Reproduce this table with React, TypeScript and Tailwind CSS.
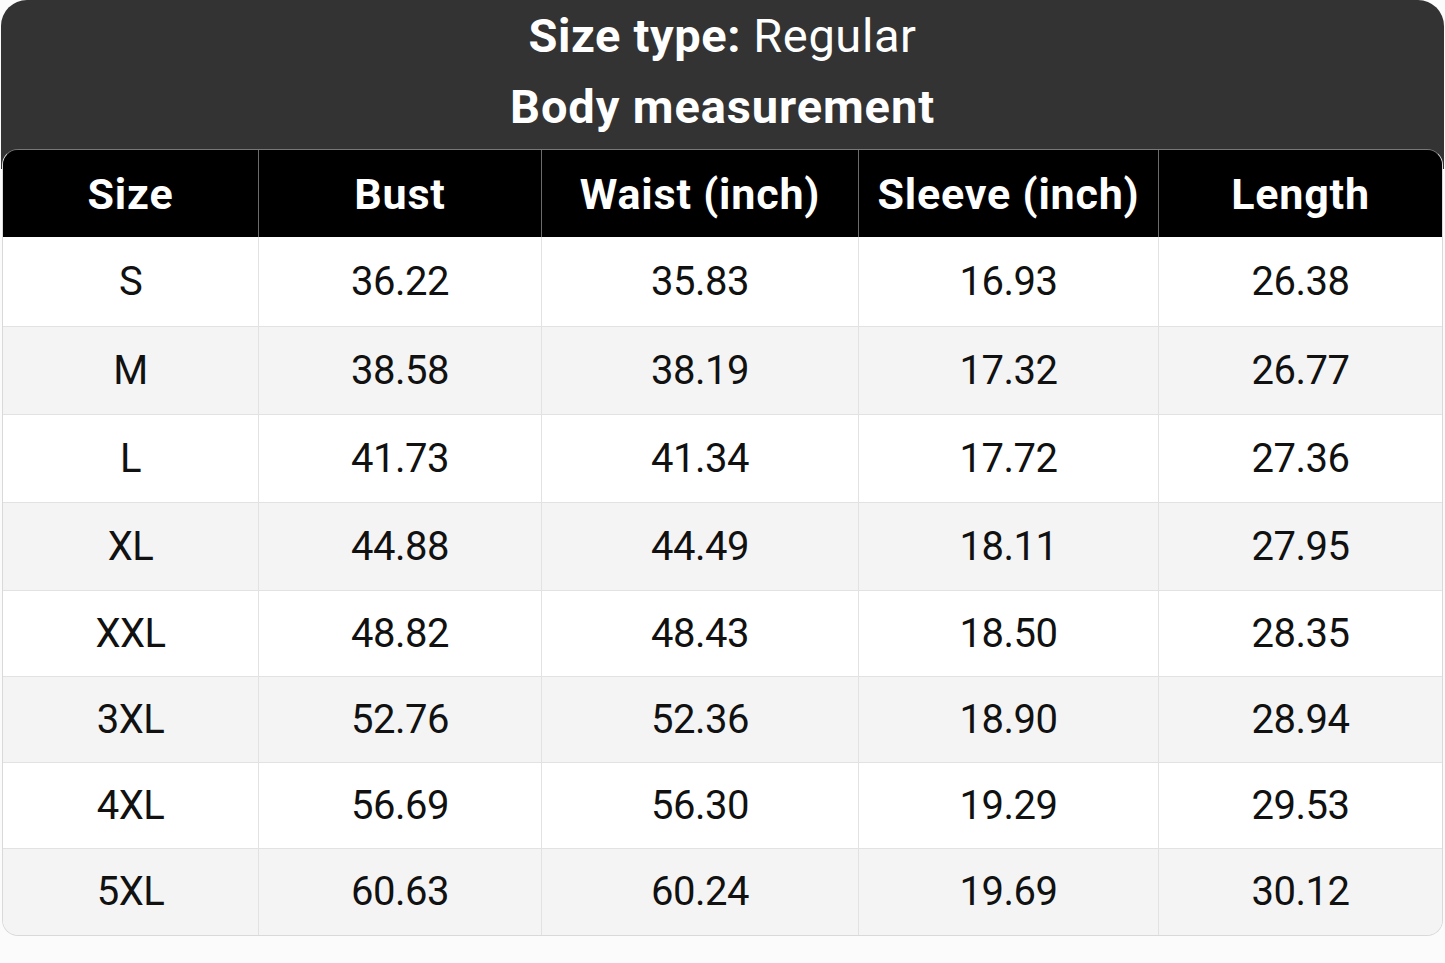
const headers = ['Size', 'Bust', 'Waist (inch)', 'Sleeve (inch)', 'Length'];

const rows = [
  ['S', '36.22', '35.83', '16.93', '26.38'],
  ['M', '38.58', '38.19', '17.32', '26.77'],
  ['L', '41.73', '41.34', '17.72', '27.36'],
  ['XL', '44.88', '44.49', '18.11', '27.95'],
  ['XXL', '48.82', '48.43', '18.50', '28.35'],
  ['3XL', '52.76', '52.36', '18.90', '28.94'],
  ['4XL', '56.69', '56.30', '19.29', '29.53'],
  ['5XL', '60.63', '60.24', '19.69', '30.12'],
];

const rowHeights = ['h-[89px]', 'h-[88px]', 'h-[88px]', 'h-[88px]', 'h-[86px]', 'h-[86px]', 'h-[86px]', 'h-[87px]'];

const cols = 'grid grid-cols-[255px_283px_317px_300px_1fr]';

export default function App() {
  return (
    <div className="min-h-[963px] bg-[#fbfbfb] px-px font-['Roboto',_'Liberation_Sans',_sans-serif]">
      <div className="flex h-[149px] flex-col items-center rounded-t-[26px] bg-[#333333] pt-[7px] text-white">
        <h1 className="text-[47px] leading-[58px] font-bold tracking-[0.6px]">
          Size type: <span className="font-normal">Regular</span>
        </h1>
        <h2 className="mt-[13px] text-[47px] leading-[58px] font-bold tracking-[0.9px]">Body measurement</h2>
      </div>

      <div className="bg-[linear-gradient(to_bottom,#333333_0,#333333_20px,transparent_20px)] px-px">
        <div className="overflow-hidden rounded-[16px] border border-[#d9d9d9] border-t-[#777]">
          <div className={`${cols} h-[87px] bg-black text-white`}>
            {headers.map((h, i) => (
              <div
                key={h}
                className={`flex items-center justify-center pt-[2px] text-[43px] font-bold tracking-[0.8px] ${i > 0 ? 'border-l border-[#6b6b6b]' : ''}`}
              >
                {h}
              </div>
            ))}
          </div>
          {rows.map((r, ri) => (
            <div
              key={r[0]}
              className={`${cols} ${rowHeights[ri]} ${ri % 2 === 0 ? 'bg-white' : 'bg-[#f4f4f4]'} ${ri > 0 ? 'border-t border-[#e2e2e2]' : ''} text-[#111]`}
            >
              {r.map((c, ci) => (
                <div
                  key={ci}
                  className={`flex items-center justify-center text-[40px] tracking-[-0.5px] ${ci > 0 ? 'border-l border-[#e2e2e2]' : ''}`}
                >
                  {c}
                </div>
              ))}
            </div>
          ))}
        </div>
      </div>
    </div>
  );
}
